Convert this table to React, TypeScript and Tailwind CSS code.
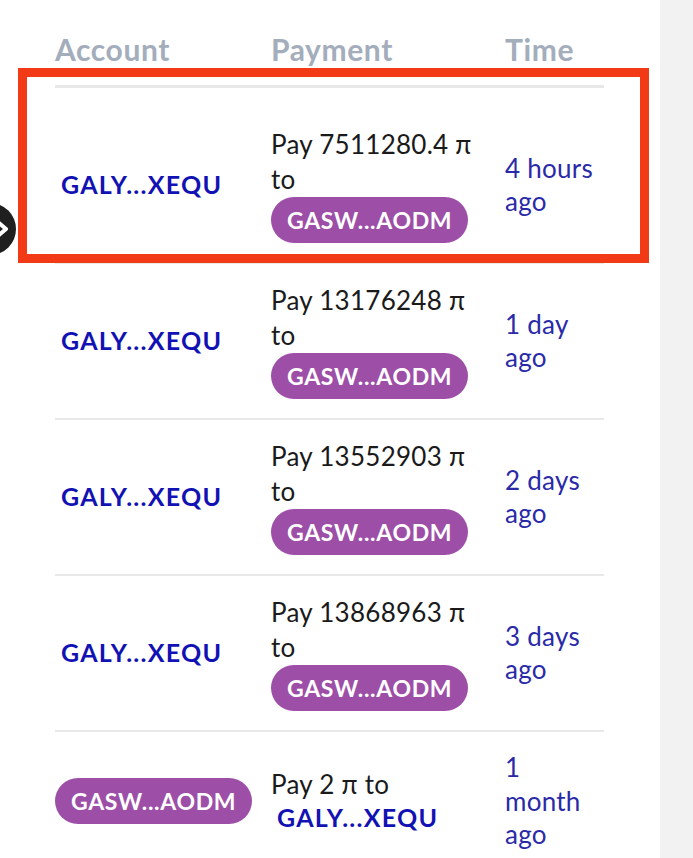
const rows = [
  { amount: '7511280.4', time: '4 hours ago' },
  { amount: '13176248', time: '1 day ago' },
  { amount: '13552903', time: '2 days ago' },
  { amount: '13868963', time: '3 days ago' },
];

function Badge({ children }: { children: React.ReactNode }) {
  return (
    <span className="inline-flex h-[46px] items-center rounded-full bg-[#9d4fa8] px-4 text-[23px] font-bold tracking-[0.03em] text-white">
      {children}
    </span>
  );
}

function AccountLink({ children }: { children: React.ReactNode }) {
  return <span className="px-[6px] text-[25px] font-bold tracking-[0.05em] text-[#1212b4]">{children}</span>;
}

export default function App() {
  return (
    <div className="flex min-h-[858px] bg-white font-['Lato',sans-serif]">
      <div className="relative w-[660px] overflow-hidden">
        <div className="ml-[55px] w-[549px] pt-[31px]">
          <div className="grid grid-cols-[216px_234px_1fr] border-b-[3px] border-[#e8e8e8] pb-[18px] text-[30px] font-bold leading-[36px] tracking-[0.02em] text-[#a3adbb]">
            <div>Account</div>
            <div>Payment</div>
            <div>Time</div>
          </div>

          {rows.map((r, i) => (
            <div
              key={r.amount}
              className={`grid grid-cols-[216px_234px_1fr] items-center border-b-2 border-[#e8e8e8] pb-[19px] ${i === 0 ? 'pt-[39px]' : 'pt-[19px]'}`}
            >
              <div>
                <AccountLink>GALY...XEQU</AccountLink>
              </div>
              <div className="text-[26px] leading-[35px] tracking-[0.01em] text-[#1a1a1a]">
                <div>Pay {r.amount} π</div>
                <div>to</div>
                <Badge>GASW...AODM</Badge>
              </div>
              <div className="pr-2 text-[26px] leading-[33px] tracking-[0.01em] text-[#2a2aa8]">{r.time}</div>
            </div>
          ))}

          <div className="grid grid-cols-[216px_234px_1fr] items-center pt-[19px] pb-[20px]">
            <div>
              <Badge>GASW...AODM</Badge>
            </div>
            <div className="text-[26px] leading-[33px] tracking-[0.01em] text-[#1a1a1a]">
              <div>Pay 2 π to</div>
              <AccountLink>GALY...XEQU</AccountLink>
            </div>
            <div className="text-[26px] leading-[33.5px] tracking-[0.01em] text-[#2a2aa8]">
              <div>1</div>
              <div>month</div>
              <div>ago</div>
            </div>
          </div>
        </div>

        <div className="pointer-events-none absolute left-[18px] top-[68px] h-[195px] w-[631px] border-[9px] border-[#f23a16]" />

        <div className="absolute left-[-36px] top-[203px] flex h-[52px] w-[52px] items-center justify-end rounded-full bg-[#1f1f1f] pr-[6px]">
          <svg width="14" height="18" viewBox="0 0 14 18" fill="none">
            <path d="M3 3l7 6-7 6" stroke="white" strokeWidth="4" strokeLinecap="round" strokeLinejoin="round" />
          </svg>
        </div>
      </div>
      <div className="flex-1 bg-[#f2f2f2]" />
    </div>
  );
}
